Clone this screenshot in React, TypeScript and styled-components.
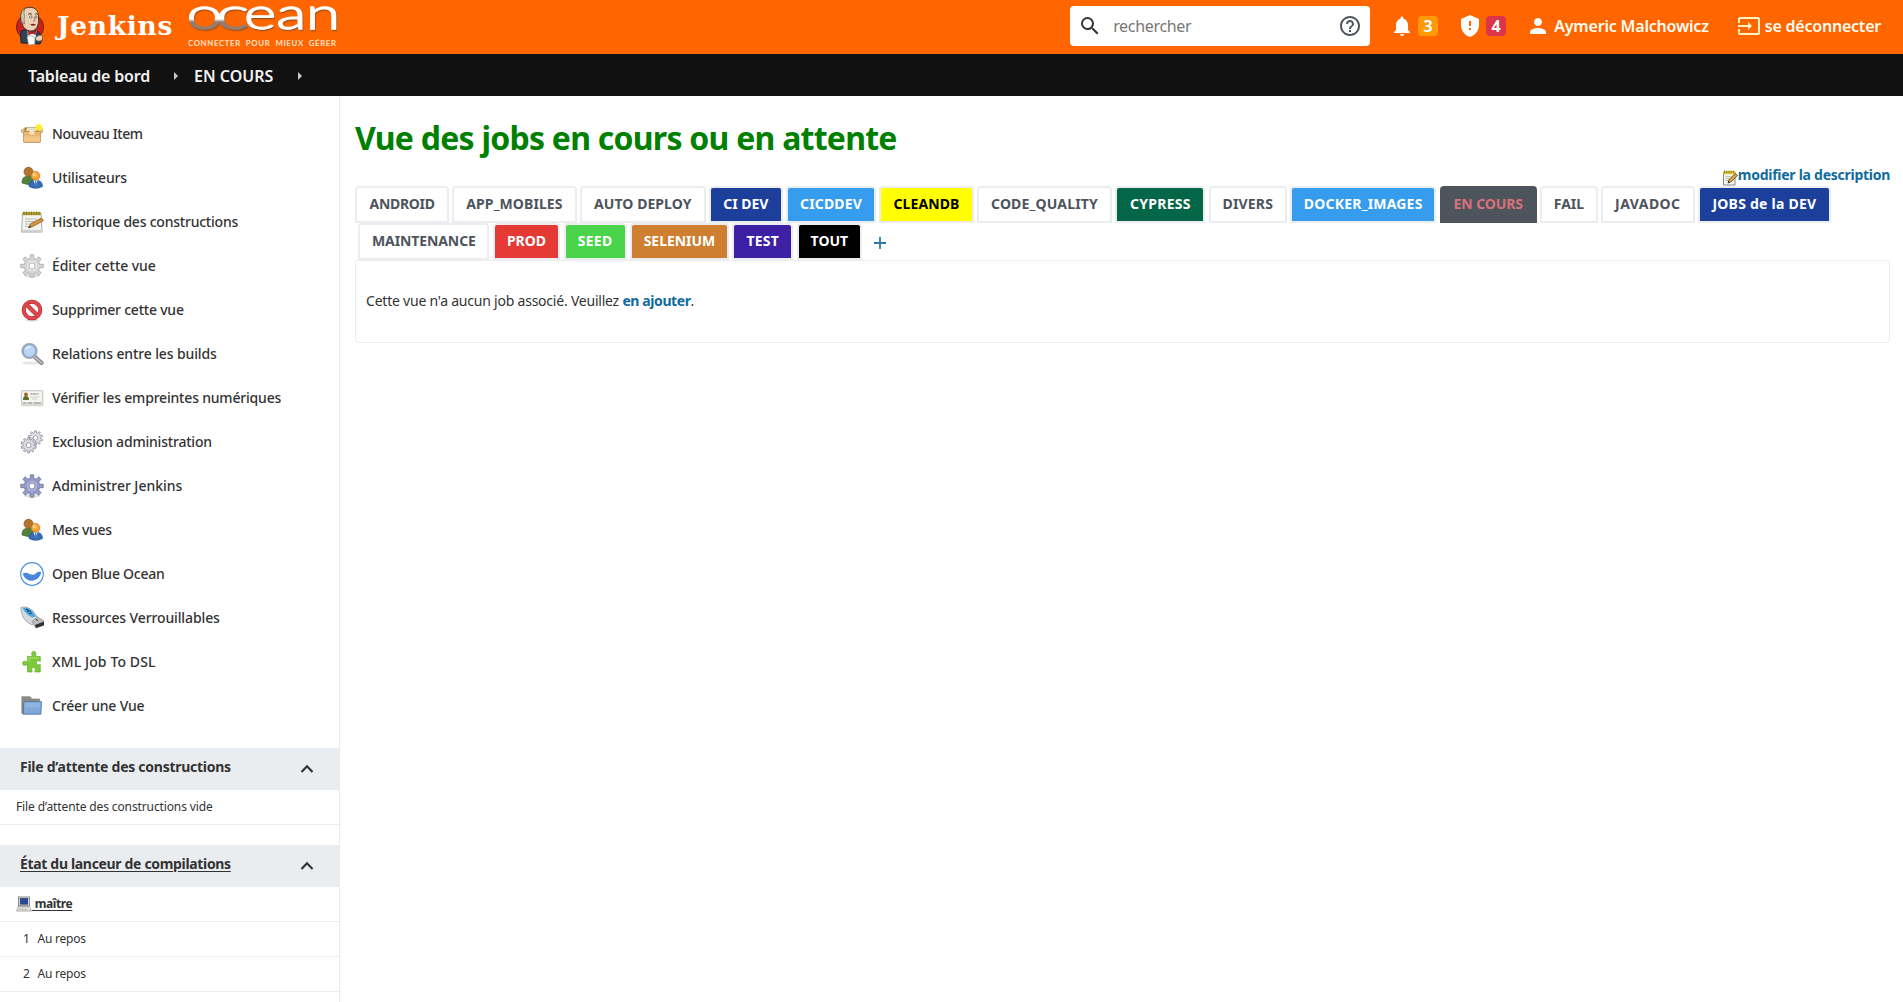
import React from "react";
import styled, { createGlobalStyle } from "styled-components";

const Global = createGlobalStyle`
  *, *::before, *::after { box-sizing: border-box; }
  html, body { margin: 0; height: 100%; overflow: hidden; }
  body { background: #fff; color: #333; font: 14px/20px "Noto Sans", "Open Sans", sans-serif; }
`;

const Page = styled.div`display: flex; flex-direction: column; height: 1002px; overflow: hidden;`;

const Text = styled.span<{ $ls?: number }>`
  letter-spacing: ${p => p.$ls ?? 0}px;
  white-space: pre;
`;

/* Header */
const Header = styled.header`
  display: flex; align-items: center; flex: none;
  height: 54px; padding: 0 22px 2px 15px;
  background: #ff6600; color: #fffdf2;
`;
const Brand = styled.div`display: flex; align-items: center; height: 52px;`;
const BrandName = styled.span`
  width: 143px; padding-left: 12px;
  font: 700 26.5px/38px "DejaVu Serif", serif; letter-spacing: 0.7px; color: #fff;
`;
const HeaderRight = styled.div`display: flex; align-items: center; margin-left: auto; font-size: 16px; font-weight: 600;`;
const Search = styled.div`
  display: flex; align-items: center; width: 300px; height: 40px; margin-right: 20px;
  padding: 0 8px; border-radius: 4px; background: #fff; color: #777; font-weight: 400;
`;
const SearchText = styled.div`flex: 1; padding-left: 11px;`;
const HeaderItem = styled.a<{ $gap: number; $mr?: number }>`
  display: flex; align-items: center; gap: ${p => p.$gap}px; margin-right: ${p => p.$mr ?? 0}px;
`;
const Badge = styled.span<{ $bg: string }>`
  width: 20px; height: 20px; border-radius: 4px; background: ${p => p.$bg};
  color: #fff; text-align: center; line-height: 20px; font-weight: 700;
`;

/* Breadcrumbs */
const Crumbs = styled.nav`
  display: flex; align-items: center; flex: none; height: 42px; padding: 2px 0 0 28px;
  background: #111; color: #f2f2f2; font-size: 16px; font-weight: 600;
`;
const Crumb = styled.span<{ $w: number }>`width: ${p => p.$w}px;`;
const Arrow = styled.i<{ $mr?: number }>`
  margin-right: ${p => p.$mr ?? 0}px;
  border-left: 4px solid #ccc; border-top: 4px solid transparent; border-bottom: 4px solid transparent;
`;

/* Layout */
const Body = styled.div`display: flex; flex: 1; min-height: 0;`;
const Side = styled.aside`width: 340px; flex: none; padding-top: 16px; border-right: 1px solid #ececec; overflow: hidden;`;
const Main = styled.main`flex: 1; padding: 22px 13px 0 15px;`;

/* Side panel */
const Task = styled.a`
  display: flex; align-items: center; gap: 8px; height: 44px; padding-left: 20px; font-weight: 500;
  svg { flex: none; }
`;
const PaneHead = styled.div<{ $link?: boolean }>`
  display: flex; align-items: flex-start; justify-content: space-between;
  height: 42px; margin-top: 20px; padding: 9px 25px 0 20px; background: #eaedf0;
  font-weight: 700;
  text-decoration: ${p => (p.$link ? "underline" : "none")};
  text-underline-offset: 2px;
`;
const PaneRow = styled.div<{ $pl?: number; $bold?: boolean }>`
  display: flex; align-items: center; height: 35px; padding-left: ${p => p.$pl ?? 16}px;
  border-bottom: 1px solid #ececec; font-size: 12px; font-weight: ${p => (p.$bold ? 700 : 400)};
`;
const Under = styled.span`text-decoration: underline; text-underline-offset: 2px; white-space: pre; letter-spacing: -0.4px;`;
const Num = styled.span`width: 14.5px;`;

/* Main panel */
const Title = styled.h1`margin: 0; font-size: 32px; line-height: 40px; font-weight: 700; color: #008000;`;
const Describe = styled.div`display: flex; justify-content: flex-end; align-items: flex-start; height: 28px; padding-top: 7px;`;
const Link = styled.a`color: #0f6b9f; font-weight: 700;`;
const NoteIcon = styled.svg`margin-top: 5px;`;
const TabRow = styled.div<{ $pl?: number; $gap: number }>`
  display: flex; height: 37px; gap: ${p => p.$gap}px; padding-left: ${p => p.$pl ?? 0}px;
`;
const Tab = styled.a<{ $w: number; $bg?: string; $fg?: string; $active?: boolean }>`
  width: ${p => p.$w}px; height: 37px; flex: none; border-radius: 4px 4px 0 0;
  border: 2px solid ${p => (p.$active ? "#4d545c" : "#ecedf0")};
  background: ${p => p.$bg ?? "#fff"}; color: ${p => p.$fg ?? "#4d545c"};
  font-weight: 700; line-height: 32px; text-align: center;
`;
const AddTab = styled.svg`margin: 14px 0 0 8.5px;`;
const Panel = styled.section`
  height: 83px; padding: 30px 10px 0; border: 1px solid #ececec; border-radius: 0 0 4px 4px;
`;

const Md = ({ d, color = "currentColor" }: { d: string; color?: string }) => (
  <svg width="24" height="24" viewBox="0 0 24 24" fill={color}><path d={d} /></svg>
);
const P = {
  search: "M15.5 14h-.79l-.28-.27A6.471 6.471 0 0 0 16 9.5 6.5 6.5 0 1 0 9.5 16c1.61 0 3.09-.59 4.23-1.57l.27.28v.79l5 4.99L20.49 19l-4.99-5zm-6 0C7.01 14 5 11.99 5 9.5S7.01 5 9.5 5 14 7.01 14 9.5 11.99 14 9.5 14z",
  help: "M11 18h2v-2h-2v2zm1-16C6.48 2 2 6.48 2 12s4.48 10 10 10 10-4.48 10-10S17.52 2 12 2zm0 18c-4.41 0-8-3.59-8-8s3.59-8 8-8 8 3.59 8 8-3.59 8-8 8zm0-14c-2.21 0-4 1.79-4 4h2c0-1.1.9-2 2-2s2 .9 2 2c0 2-3 1.75-3 5h2c0-2.25 3-2.5 3-5 0-2.21-1.79-4-4-4z",
  bell: "M12 22c1.1 0 2-.9 2-2h-4c0 1.1.89 2 2 2zm6-6v-5c0-3.07-1.64-5.64-4.5-6.32V4c0-.83-.67-1.5-1.5-1.5s-1.5.67-1.5 1.5v.68C7.63 5.36 6 7.92 6 11v5l-2 2v1h16v-1l-2-2z",
  shield: "M12 1L3 5v6c0 5.55 3.84 10.74 9 12 5.16-1.26 9-6.45 9-12V5l-9-4zm1 15h-2v-2h2v2zm0-4h-2V7h2v5z",
  person: "M12 12c2.21 0 4-1.79 4-4s-1.79-4-4-4-4 1.79-4 4 1.79 4 4 4zm0 2c-2.67 0-8 1.34-8 4v2h16v-2c0-2.66-5.33-4-8-4z",
  exit: "M21 3.01H3c-1.1 0-2 .9-2 2V9h2V4.99h18v14.03H3V15H1v4.01c0 1.1.9 1.98 2 1.98h18c1.1 0 2-.88 2-1.98v-14c0-1.11-.9-2-2-2zM11 16l4-4-4-4v3H1v2h10v3z",
};

const Butler = () => (
  <svg width="30" height="40" viewBox="0 0 30 40">
    <ellipse cx="15" cy="21" rx="13.6" ry="13" fill="#c9211e" stroke="#651512" strokeWidth="0.8" />
    <path d="M6 25 Q10 23 13 24 L22 25 Q26 27 27 34 L25 38 L6 37 Q5 30 6 25z" fill="#2f4358" stroke="#16202c" strokeWidth="0.8" />
    <path d="M6 13 Q4.500 1.500 15 1.200 Q23 1.500 23.500 10 Q24.500 17 22 21.500 Q19 26 14.500 25 Q8 23 7.500 18 Q5 16.500 6 13z" fill="#ecd2b4" stroke="#3d3026" strokeWidth="0.9" />
    <path d="M6 13 Q5 5 10 2.500 Q8 6 9.500 10 Q8.500 14 9.500 18 Q6.500 17 6 13z" fill="#d0c9bf" stroke="#4a4038" strokeWidth="0.5" />
    <path d="M13 8.300 Q15 6.800 17 8.300 M20 8 Q21.500 7.200 22.800 8.300" fill="none" stroke="#3d2c20" strokeWidth="0.9" />
    <circle cx="15.700" cy="11" r="1.200" fill="#fff" stroke="#333" strokeWidth="0.6" />
    <circle cx="21" cy="11" r="1.100" fill="#fff" stroke="#333" strokeWidth="0.6" />
    <path d="M18.500 11 Q21.500 15 18 15.300" fill="none" stroke="#a36b4a" strokeWidth="0.9" />
    <path d="M15 18.500 Q18.500 17 21 18.700 Q18 21 15 18.500z" fill="#7a2a21" />
    <path d="M12.500 24.500 L17 28 L21.500 24.500 L20 36 L13 36z" fill="#fff" />
    <path d="M13 24.500 L17 26.300 L21 24.500 L20.700 28.800 L17.300 27.300 L13.500 29z" fill="#c9211e" stroke="#651512" strokeWidth="0.4" />
    <path d="M12 30.500 Q16 28.800 19 30.500 L20 38.500 L13.500 39 z" fill="#fff" stroke="#777" strokeWidth="0.5" />
    <path d="M21 31 Q25 27.800 27.800 30 L27 34.500 Q23 36 20.500 34z" fill="#ecd2b4" stroke="#3d3026" strokeWidth="0.5" />
  </svg>
);

const OceanLogo = () => (
  <svg width="152" height="50" viewBox="0 0 152 50">
    <defs>
      <linearGradient id="wave" gradientUnits="userSpaceOnUse" x1="0" y1="6" x2="0" y2="30">
        <stop offset="0" stopColor="#fff" /><stop offset="0.5" stopColor="#fff" />
        <stop offset="0.62" stopColor="#8d7f74" /><stop offset="1" stopColor="#8d7f74" />
      </linearGradient>
      <filter id="soft" x="-5%" y="-10%" width="110%" height="130%">
        <feDropShadow dx="0.8" dy="1.400" stdDeviation="0.7" floodColor="#8a4a1c" floodOpacity="0.75" />
      </filter>
    </defs>
    <g filter="url(#soft)" fontFamily="Lato, sans-serif" fontSize="44" fontWeight="300" fill="#fff" stroke="#fff" strokeWidth="1.3">
      <text y="27.500" fill="url(#wave)" stroke="url(#wave)">
        <tspan x="-1.500" textLength="36" lengthAdjust="spacingAndGlyphs">o</tspan>
      </text>
      <text y="27.500" fill="url(#wave)" stroke="url(#wave)">
        <tspan x="28" textLength="33" lengthAdjust="spacingAndGlyphs">c</tspan>
      </text>
      <text y="27.500"><tspan x="56" textLength="96" lengthAdjust="spacingAndGlyphs">ean</tspan></text>
    </g>
    <text x="0" y="45.300" textLength="148" fontFamily="Lato, sans-serif" fontSize="7.800" fontWeight="700" fill="#ffe2c8" xmlSpace="preserve">CONNECTER  POUR  MIEUX  GÉRER</text>
  </svg>
);

const Box = () => (
  <svg width="24" height="24" viewBox="0 0 24 24">
    <path d="M3.500 9h17v10.500q0 1-1 1h-15q-1 0-1-1z" fill="#e8b872" stroke="#b98a4a" strokeWidth="0.7" />
    <path d="M5.500 5.500h13l2 4h-17z" fill="#8c6a3c" />
    <path d="M7 6h9l1.500 3h-12z" fill="#efe0c4" />
    <path d="M5.500 5.500L1 8.500l1 2.500 2-1.500z M18.500 5.500L23 8.500l-1 2.500-2-1.500z" fill="#edc588" stroke="#b98a4a" strokeWidth="0.6" />
    <path d="M4 14.500h16v5H4z" fill="#f4cf96" opacity="0.7" />
    <path d="M9.500 9h5v3.500h-5z" fill="#f7e2bb" />
    <path d="M18.500 0.700l1.200 2.200 2.600-.5-.8 2.400 1.700 2-2.600.6-1.500 2.300-1.700-2-2.600-.3 1.200-2.200-.9-2.200 2.500-.1z" fill="#fbee2f" />
  </svg>
);
const People = () => (
  <svg width="24" height="24" viewBox="0 0 24 24">
    <path d="M2 17q-.5-7 6.500-7t7 8q-7 2-13.500-1z" fill="#55803a" stroke="#3d5f27" strokeWidth="0.6" />
    <circle cx="8.500" cy="5.800" r="4.500" fill="#b5752f" stroke="#87531b" strokeWidth="0.7" />
    <path d="M9 20.500q-.5-6.500 6.500-6.500t7 6.500q-7 3.700-13.500 0z" fill="#356cb5" stroke="#24508c" strokeWidth="0.6" />
    <path d="M13.300 14.200l2.300 5 2.100-5z" fill="#fff" /><path d="M15 15h1.200l.5 4.500-1 1.200-1-1.200z" fill="#4f7fbc" />
    <circle cx="15.500" cy="9.800" r="4.400" fill="#f0a63c" stroke="#bb7317" strokeWidth="0.7" />
    <circle cx="14.500" cy="8.500" r="1.900" fill="#fbd38a" opacity="0.8" />
  </svg>
);
const notepad = (
  <>
    <path d="M2.500 3.500h18.500l1 18.500h-20.500z" fill="#f3f3f1" stroke="#9b9b98" strokeWidth="0.8" />
    <path d="M1.500 20h20.700v2.600H1.500z" fill="#cfcfcd" />
    <path d="M2.500 2h18.300v3.200H2.500z" fill="#b4a337" />
    <path d="M4 1.500v3.500M6.500 1.500v3.500M9 1.500v3.500M11.500 1.500v3.500M14 1.500v3.500M16.500 1.500v3.500M19 1.500v3.500" stroke="#776a1c" strokeWidth="0.8" />
    <path d="M5 9h12M5 11.500h9M5 14h7M5 16.500h5" stroke="#b3b3b3" strokeWidth="0.9" />
    <path d="M8.500 18l2.200-4.300L21.500 8l2 2.600-10.800 6z" fill="#d8923c" stroke="#87551c" strokeWidth="0.7" />
    <path d="M8.500 18l1.200-2.400 1.300 1.700z" fill="#333" />
  </>
);
const Notepad = () => <svg width="24" height="24" viewBox="0 0 24 24">{notepad}</svg>;
const SmallNote = () => (
  <NoteIcon width="16" height="16" viewBox="0 0 16 16">
    <path d="M1.500 2.500h11.500v12.500h-11.500z" fill="#f6f5f0" stroke="#7c7c78" strokeWidth="0.9" />
    <path d="M1.500 1h11.800v3.200H1.500z" fill="#e3c42f" />
    <path d="M2.500 .6v2.400M4.700 .6v2.400M6.900 .6v2.400M9.100 .6v2.400M11.300 .6v2.400" stroke="#7a6814" strokeWidth="0.8" />
    <path d="M3.500 6.500h5M3.500 8.500h3.500M3.500 10.500h2.500" stroke="#b0b0ac" strokeWidth="0.8" />
    <path d="M6 13l1-3.500 6.300-6 2.200 1.900-6.200 6.200z" fill="#dba348" stroke="#553c14" strokeWidth="0.8" />
    <path d="M6 13l.5-1.900 1.500 1.200z" fill="#222" />
  </NoteIcon>
);
const gearPath = (cx: number, cy: number, r1: number, r2: number, n: number) => {
  const pts: string[] = [];
  for (let i = 0; i < n; i++) {
    [[-0.30, r1], [-0.19, r2], [0.19, r2], [0.30, r1]].forEach(([o, r]) => {
      const a = ((i + o) / n) * Math.PI * 2 - Math.PI / 2;
      pts.push(`${(cx + Math.cos(a) * r).toFixed(2)} ${(cy + Math.sin(a) * r).toFixed(2)}`);
    });
  }
  return `M${pts.join("L")}Z`;
};
const Gear = ({ fill, line, shade }: { fill: string; line: string; shade: string }) => (
  <svg width="24" height="24" viewBox="0 0 24 24">
    <ellipse cx="12" cy="21.500" rx="8" ry="2" fill="#ddd" />
    <path d={gearPath(12, 12, 7.9, 11.4, 8)} fill={fill} stroke={line} strokeWidth="0.7" />
    <circle cx="12" cy="12" r="5.500" fill={shade} opacity="0.6" />
    <circle cx="12" cy="12" r="3" fill="#fff" stroke={line} strokeWidth="0.7" />
  </svg>
);
const Gears = () => (
  <svg width="24" height="24" viewBox="0 0 24 24">
    <path d={gearPath(15.5, 8, 5.2, 7.2, 10)} fill="#e2e2e6" stroke="#8f8f98" strokeWidth="0.8" />
    <circle cx="15.500" cy="8" r="2.300" fill="#fff" stroke="#8f8f98" strokeWidth="0.8" />
    <path d={gearPath(8.7, 15.2, 5.6, 7.8, 10)} fill="#dcdce4" stroke="#85858f" strokeWidth="0.8" />
    <circle cx="8.700" cy="15.200" r="2.500" fill="#fff" stroke="#85858f" strokeWidth="0.8" />
  </svg>
);
const Stop = () => (
  <svg width="24" height="24" viewBox="0 0 24 24">
    <ellipse cx="12" cy="22" rx="7" ry="1.500" fill="#ddd" />
    <circle cx="12" cy="12" r="8.300" fill="#f8f4f4" stroke="#b3252b" strokeWidth="4" />
    <circle cx="12" cy="12" r="8.300" fill="none" stroke="#e04a4e" strokeWidth="2.800" />
    <path d="M6.500 6.500l11 11" stroke="#b3252b" strokeWidth="4" /><path d="M6 6l12 12" stroke="#e04a4e" strokeWidth="2.800" />
  </svg>
);
const Loupe = () => (
  <svg width="24" height="24" viewBox="0 0 24 24">
    <ellipse cx="11" cy="21" rx="9" ry="1.600" fill="#e6e6e6" />
    <path d="M14.500 14.500l7 6.500" stroke="#777" strokeWidth="4" strokeLinecap="round" /><path d="M14.500 14.500l7 6.500" stroke="#b9b9b9" strokeWidth="2.200" strokeLinecap="round" />
    <circle cx="9.500" cy="9" r="7.200" fill="#b9d5f5" stroke="#a2a7b5" strokeWidth="1.800" />
    <circle cx="9.500" cy="9" r="6.200" fill="none" stroke="#7799c9" strokeWidth="0.7" />
    <path d="M5 8q1-4 5-4.300 2 .5 0 2-3 1-5 2.300z" fill="#e6f1fd" />
  </svg>
);
const IdCard = () => (
  <svg width="24" height="24" viewBox="0 0 24 24">
    <rect x="1.400" y="4.700" width="21.400" height="15" rx="0.800" fill="#f4f4f0" stroke="#b4b4b0" strokeWidth="0.8" />
    <path d="M1.500 16h21v3.500h-21z" fill="#dddeda" />
    <path d="M3 14q0-4 3-4t3 4z" fill="#5d6b25" /><circle cx="6" cy="8.500" r="2" fill="#a8672a" />
    <path d="M10.500 8h8" stroke="#777" strokeWidth="1" strokeDasharray="2 .5" /><path d="M10.500 11h9M12 13h5" stroke="#c5c5c5" strokeWidth="0.8" />
    <path d="M3 17h3M7.500 17h4.500M14 17h7" stroke="#888" strokeWidth="0.9" />
  </svg>
);
const BlueOcean = () => (
  <svg width="24" height="24" viewBox="0 0 24 24">
    <circle cx="12" cy="12" r="11.300" fill="#fff" stroke="#4a90e2" strokeWidth="1.200" />
    <path d="M2.700 11.500Q6 9.800 9.500 12 13.500 14 16 11.200 18.500 9 21.200 10.300A9.400 9.400 0 0 1 2.700 11.500z" fill="#4a86dc" />
  </svg>
);
const Usb = () => (
  <svg width="24" height="24" viewBox="0 0 24 24">
    <path d="M1 1.500Q7-.5 13 5l5 7-5.500 7Q5 16 2.500 9.500 .5 4 1 1.500z" fill="#d5dade" stroke="#929da5" strokeWidth="0.8" />
    <path d="M2.500 2Q8 .5 12 5l4 5.500-3.500 1Q6 9 2.500 2z" fill="#4ba6dc" />
    <path d="M6 3l3 1.500M7 5.500l4-.5M9 7.500l3-.5" stroke="#124d7d" strokeWidth="1.100" />
    <path d="M12 15.500l5.500-4.500 6.500 4v4l-8 3z" fill="#bcbcbc" stroke="#777" strokeWidth="0.6" />
    <path d="M15 19l9-3.500v3.700l-8 2.800z" fill="#333" /><path d="M16 13.500l2 1" stroke="#444" strokeWidth="1.200" />
  </svg>
);
const Puzzle = () => (
  <svg width="24" height="24" viewBox="0 0 24 24">
    <path d="M7.500 6.500h4.800Q10.500 1.500 13.800 1.500T15.300 6.500h5v4.700q-4-1.300-4 1.600t4 1.700v7.500h-5.500q1.500-4.500-1.200-4.500t-1.400 4.500H7.500v-7.300Q2.500 16.500 2.500 13.300t5-1.500z" fill="#7cc93c" stroke="#65ad2b" strokeWidth="0.7" />
    <path d="M9 8h10M9 8v4" stroke="#a4e56c" strokeWidth="1" fill="none" />
  </svg>
);
const Folder = () => (
  <svg width="24" height="24" viewBox="0 0 24 24">
    <path d="M1.800 2.700h8.400l1.500 2.300h8v14.500H1.800z" fill="#8a8a87" stroke="#777" strokeWidth="0.6" />
    <path d="M4 7.700h17.500l-.6 12.500H3.200z" fill="#7fa9d8" stroke="#46719f" strokeWidth="0.8" />
    <path d="M4.500 8.500h16l-.3 5H4.300z" fill="#94b9e2" opacity="0.7" />
  </svg>
);
const Computer = () => (
  <svg width="16" height="16" viewBox="0 0 16 16">
    <rect x="2.500" y="1" width="11" height="8.700" fill="#dddcd6" stroke="#777" strokeWidth="0.8" />
    <rect x="4.200" y="2.400" width="7.600" height="5.800" fill="#264b9b" stroke="#152d64" strokeWidth="0.5" />
    <path d="M2.500 10.500h11l2 4.500h-15z" fill="#ecebe6" stroke="#888" strokeWidth="0.7" />
    <path d="M3 12h9.500M2.500 13.500h9" stroke="#aaa" strokeWidth="0.6" />
  </svg>
);

const ViewGear = () => <Gear fill="#d4d4d4" line="#a2a2a2" shade="#efefef" />;
const AdminGear = () => <Gear fill="#9299c4" line="#6a7095" shade="#bcc2e2" />;

const tasks: [React.ComponentType, string, number][] = [
  [Box, "Nouveau Item", -0.42],
  [People, "Utilisateurs", -0.15],
  [Notepad, "Historique des constructions", -0.22],
  [ViewGear, "Éditer cette vue", -0.06],
  [Stop, "Supprimer cette vue", -0.22],
  [Loupe, "Relations entre les builds", -0.12],
  [IdCard, "Vérifier les empreintes numériques", -0.19],
  [Gears, "Exclusion administration", -0.2],
  [AdminGear, "Administrer Jenkins", -0.04],
  [People, "Mes vues", -0.32],
  [BlueOcean, "Open Blue Ocean", -0.24],
  [Usb, "Ressources Verrouillables", -0.12],
  [Puzzle, "XML Job To DSL", 0.12],
  [Folder, "Créer une Vue", -0.17],
];

type TabData = { t: string; w: number; ls: number; bg?: string; fg?: string; on?: boolean };
const rowOne: TabData[] = [
  { t: "ANDROID", w: 93.6, ls: -0.3 },
  { t: "APP_MOBILES", w: 124.3, ls: 0.1 },
  { t: "AUTO DEPLOY", w: 125.6, ls: 0.05 },
  { t: "CI DEV", w: 73.6, ls: 0, bg: "#1c3f9b", fg: "#fff" },
  { t: "CICDDEV", w: 90, ls: 0.15, bg: "#359cee", fg: "#fff" },
  { t: "CLEANDB", w: 94.2, ls: 0.1, bg: "#ffff00", fg: "#000" },
  { t: "CODE_QUALITY", w: 135, ls: 0.17 },
  { t: "CYPRESS", w: 90, ls: 0.25, bg: "#036646", fg: "#fff" },
  { t: "DIVERS", w: 78, ls: 0.15 },
  { t: "DOCKER_IMAGES", w: 146, ls: 0.2, bg: "#359cee", fg: "#fff" },
  { t: "EN COURS", w: 97.3, ls: -0.1, bg: "#4d545c", fg: "#d8717a", on: true },
  { t: "FAIL", w: 57.2, ls: 0 },
  { t: "JAVADOC", w: 93.8, ls: 0.45 },
  { t: "JOBS de la DEV", w: 132.5, ls: 0.24, bg: "#1c3f9b", fg: "#fff" },
];
const rowTwo: TabData[] = [
  { t: "MAINTENANCE", w: 131, ls: -0.1 },
  { t: "PROD", w: 67, ls: 0, bg: "#e53935", fg: "#fff" },
  { t: "SEED", w: 63, ls: 0.3, bg: "#4ad44c", fg: "#fff" },
  { t: "SELENIUM", w: 98.5, ls: -0.05, bg: "#ce7f32", fg: "#fff" },
  { t: "TEST", w: 61, ls: 0.2, bg: "#3d20a3", fg: "#fff" },
  { t: "TOUT", w: 65, ls: 0, bg: "#000", fg: "#fff" },
];
const renderTab = (x: TabData) => (
  <Tab key={x.t} $w={x.w} $bg={x.bg} $fg={x.fg} $active={x.on}><Text $ls={x.ls}>{x.t}</Text></Tab>
);

const Up = () => (
  <svg width="14" height="20" viewBox="0 0 14 20"><path d="M1.500 15l5.500-5.700 5.500 5.700" fill="none" stroke="#333" strokeWidth="2.200" /></svg>
);

export default function App() {
  return (
    <Page>
      <Global />
      <Header>
        <Brand><Butler /><BrandName>Jenkins</BrandName><OceanLogo /></Brand>
        <HeaderRight>
          <Search>
            <Md d={P.search} color="#333" />
            <SearchText><Text $ls={-0.32}>rechercher</Text></SearchText>
            <Md d={P.help} color="#4d545c" />
          </Search>
          <HeaderItem $gap={4} $mr={20}><Md d={P.bell} color="#fff" /><Badge $bg="#fe9a06">3</Badge></HeaderItem>
          <HeaderItem $gap={4} $mr={20}><Md d={P.shield} color="#fff" /><Badge $bg="#dc3549">4</Badge></HeaderItem>
          <HeaderItem $gap={4} $mr={28}><Md d={P.person} color="#fff" /><Text $ls={-0.19}>Aymeric Malchowicz</Text></HeaderItem>
          <HeaderItem $gap={4}><Md d={P.exit} color="#fff3c4" /><Text $ls={-0.22}>se déconnecter</Text></HeaderItem>
        </HeaderRight>
      </Header>
      <Crumbs>
        <Crumb $w={146}><Text $ls={-0.19}>Tableau de bord</Text></Crumb><Arrow $mr={16} />
        <Crumb $w={104}><Text $ls={0}>EN COURS</Text></Crumb><Arrow />
      </Crumbs>
      <Body>
        <Side>
          {tasks.map(([Icon, label, ls]) => (
            <Task key={label}><Icon /><Text $ls={ls}>{label}</Text></Task>
          ))}
          <PaneHead><Text $ls={-0.26}>File d’attente des constructions</Text><Up /></PaneHead>
          <PaneRow><Text $ls={-0.12}>File d’attente des constructions vide</Text></PaneRow>
          <PaneHead $link><Text $ls={-0.33}>État du lanceur de compilations</Text><Up /></PaneHead>
          <PaneRow $bold><Computer /><Under> maître</Under></PaneRow>
          <PaneRow $pl={23}><Num>1</Num><Text $ls={-0.24}>Au repos</Text></PaneRow>
          <PaneRow $pl={23}><Num>2</Num><Text $ls={-0.24}>Au repos</Text></PaneRow>
        </Side>
        <Main>
          <Title><Text $ls={-0.75}>Vue des jobs en cours ou en attente</Text></Title>
          <Describe>
            <SmallNote />
            <Link><Text $ls={-0.27}>modifier la description</Text></Link>
          </Describe>
          <TabRow $gap={3.42} $pl={0.3}>{rowOne.map(renderTab)}</TabRow>
          <TabRow $gap={3.6} $pl={3.4}>
            {rowTwo.map(renderTab)}
            <AddTab width="12" height="12" viewBox="0 0 12 12"><path d="M6 0v12M0 6h12" stroke="#2f7ba6" strokeWidth="1.800" /></AddTab>
          </TabRow>
          <Panel>
            <Text $ls={-0.22}>Cette vue n'a aucun job associé. Veuillez </Text>
            <Link><Text $ls={-0.4}>en ajouter</Text></Link>.
          </Panel>
        </Main>
      </Body>
    </Page>
  );
}
